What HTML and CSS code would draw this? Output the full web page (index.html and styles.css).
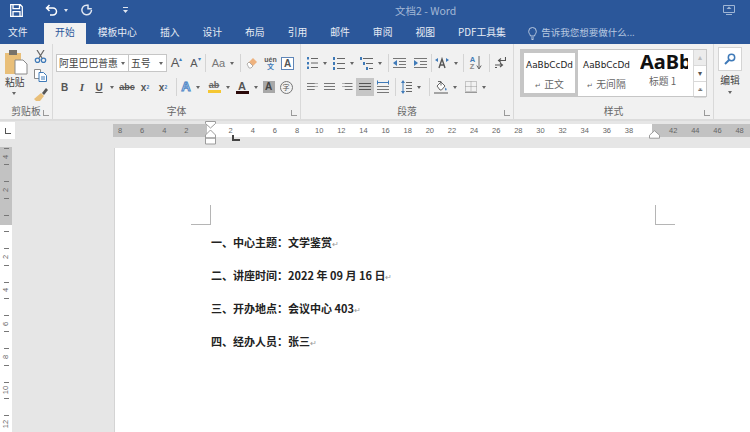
FILE: index.html
```html
<!DOCTYPE html>
<html lang="zh-CN">
<head>
  <meta charset="UTF-8" />
  <title>文档2 - Word</title>
  <link rel="stylesheet" href="styles.css">
</head>
<body>
  <!-- 标题栏 -->
  <div class="titlebar">
    <svg class="qa-save" width="13" height="13" viewBox="0 0 13 13"><path d="M.7.7h9.6l2 2v9.6H.7zM3 .7v4h6.5v-4M3 12.3V7.6h7v4.7" fill="none" stroke="#fff" stroke-width="1.3"/></svg>
    <svg class="qa-undo" width="13" height="12" viewBox="0 0 13 12"><path d="M4.500 1 1.500 4l3 3M1.500 4h6.500a3.500 3.500 0 0 1 0 7H5" fill="none" stroke="#fff" stroke-width="1.500"/></svg>
    <span class="arrow arrow-white qa-arrow"></span>
    <svg class="qa-redo" width="12" height="12" viewBox="0 0 12 12"><path d="M7.500 1.500A4.800 4.800 0 1 0 10.500 6M7 .5v4.200h3.800" fill="none" stroke="#dfe6f1" stroke-width="1.500"/></svg>
    <svg class="qa-more" width="5" height="6" viewBox="0 0 5 6"><path d="M0 0h5v1H0zM0 3h5L2.500 6z" fill="#dfe6f1"/></svg>
    <span class="doc-title">文档2 - Word</span>
    <svg class="restore" width="12" height="10" viewBox="0 0 12 10"><path d="M.5.500h11v7H.5zM3 9.500h6" fill="none" stroke="#9fb5d4"/><path d="m6 1.500 2.500 2.500h-5z" fill="#9fb5d4"/></svg>
  </div>

  <!-- 选项卡 -->
  <div class="tabs">
    <span class="tab tab-file">文件</span>
    <span class="tab tab-on">开始</span>
    <span class="tab">模板中心</span>
    <span class="tab">插入</span>
    <span class="tab">设计</span>
    <span class="tab">布局</span>
    <span class="tab">引用</span>
    <span class="tab">邮件</span>
    <span class="tab">审阅</span>
    <span class="tab">视图</span>
    <span class="tab">PDF工具集</span>
    <svg class="bulb" width="9" height="13" viewBox="0 0 9 13"><path d="M2.500 9C2 7 .7 6.500.7 4.300a3.800 3.800 0 0 1 7.600 0C8.300 6.500 7 7 6.500 9zM3 11h3M3.500 12.500h2" fill="none" stroke="#b9c9e0"/></svg>
    <span class="tell">告诉我您想要做什么...</span>
  </div>

  <!-- 功能区 -->
  <div class="ribbon">
    <div class="group g-clip">
      <div class="clip-body">
        <div class="paste">
          <svg width="23" height="25" viewBox="0 0 23 25"><rect x="0" y="3" width="16" height="21" fill="#e9bf79"/><rect x="4" y="0" width="8" height="5" fill="#77726a"/><path d="M10 10h8l4 4v10H10z" fill="#fff" stroke="#8a8a8a"/></svg>
          <span class="paste-text">粘贴</span>
          <span class="arrow"></span>
        </div>
        <div class="clip-tools">
          <svg width="13" height="13" viewBox="0 0 13 13"><path d="M3 0l5 8M10 0 5 8" fill="none" stroke="#666" stroke-width="1.200"/><circle cx="3.500" cy="10.300" r="2.200" fill="none" stroke="#3f7ab8" stroke-width="1.300"/><circle cx="9.500" cy="10.300" r="2.200" fill="none" stroke="#3f7ab8" stroke-width="1.300"/></svg>
          <svg width="13" height="13" viewBox="0 0 13 13"><path d="M.5.500h6v9h-6z" fill="#fff" stroke="#8a8a8a"/><path d="M5 3.500h4.500l3 3v6H5z" fill="#fff" stroke="#3f7ab8"/><path d="M7 8h4M7 10h4" stroke="#3f7ab8"/></svg>
          <svg width="14" height="13" viewBox="0 0 14 13"><path d="m7 5 3 3-4 5H2l-2-2z" fill="#e9bf79"/><path d="m8 5 4-5 2 2-4 5z" fill="#555"/></svg>
        </div>
      </div>
      <div class="group-label">剪贴板</div>
      <span class="launcher"></span>
    </div>

    <div class="group g-font">
      <div class="row font-row1">
        <div class="select"><span>阿里巴巴普惠</span><span class="arrow"></span></div>
        <div class="select select-size"><span>五号</span><span class="arrow"></span></div>
        <div class="cell"><span class="big-a">A<sup class="tri">▴</sup></span></div>
        <div class="cell"><span class="small-a">A<sup class="tri">▾</sup></span></div>
        <i class="sep"></i>
        <div class="cell"><span class="aa">Aa</span><span class="arrow"></span></div>
        <i class="sep"></i>
        <div class="cell">
          <svg width="12" height="13" viewBox="0 0 12 13"><path d="m1 7 6-6 4 4-6 6z" fill="#eeb27e"/><path d="m1 7 2-2 4 4-2 2H3z" fill="#fff" stroke="#888" stroke-width=".6"/></svg>
        </div>
        <div class="cell"><span class="ruby"><b>uén</b><b class="ruby-cn">文</b></span></div>
        <div class="cell"><span class="box-a">A</span></div>
      </div>
      <div class="row font-row2">
        <div class="cell fmt"><b>B</b></div>
        <div class="cell fmt"><i>I</i></div>
        <div class="cell fmt"><u>U</u><span class="arrow"></span></div>
        <div class="cell fmt"><s>abc</s></div>
        <div class="cell fmt">x<sub class="blue-idx">2</sub></div>
        <div class="cell fmt">x<sup class="blue-idx">2</sup></div>
        <i class="sep"></i>
        <div class="cell"><span class="fx-a">A</span><span class="arrow"></span></div>
        <div class="cell"><span class="hl-ab">ab</span><span class="arrow"></span></div>
        <div class="cell"><span class="color-a">A</span><span class="arrow"></span></div>
        <div class="cell"><span class="shade-a">A</span></div>
        <div class="cell"><span class="circle-zi">字</span></div>
      </div>
      <div class="group-label">字体</div>
      <span class="launcher"></span>
    </div>

    <div class="group g-para">
      <div class="row para-row1">
        <div class="cell"><svg width="11" height="12" viewBox="0 0 11 12"><path d="M4 1.500h7M4 6h7M4 10.500h7" stroke="#666"/><path d="M0 0h2v2.500H0zM0 5h2v2.500H0zM0 9.500h2V12H0z" fill="#3f7ab8"/></svg><span class="arrow"></span></div>
        <div class="cell"><svg width="12" height="13" viewBox="0 0 12 13"><path d="M4 1.500h8M4 6.500h8M4 11.500h8" stroke="#666"/><path d="M0 0h2v3H0zM0 5h2v3H0zM0 10h2v3H0z" fill="#3f7ab8"/></svg><span class="arrow"></span></div>
        <div class="cell"><svg width="13" height="13" viewBox="0 0 13 13"><path d="M3 1.500h10M6 6.500h7M9 11.500h4" stroke="#666"/><path d="M0 0h2v3H0zM3 5h2v3H3zM6 10h2v3H6z" fill="#3f7ab8"/></svg><span class="arrow"></span></div>
        <i class="sep"></i>
        <div class="cell"><svg width="13" height="11" viewBox="0 0 13 11"><path d="M0 .5h13M6 3.500h7M6 6.500h7M0 9.500h13" stroke="#777"/><path d="M0 5l4-3v6z" fill="#3f7ab8"/></svg></div>
        <div class="cell"><svg width="13" height="11" viewBox="0 0 13 11"><path d="M0 .5h13M6 3.500h7M6 6.500h7M0 9.500h13" stroke="#777"/><path d="M4 5 0 2v6z" fill="#3f7ab8"/></svg></div>
        <i class="sep"></i>
        <div class="cell"><svg width="14" height="12" viewBox="0 0 14 12"><path d="m4 11 3-9 3 9M5 8h4" fill="none" stroke="#555" stroke-width="1.400"/><path d="M0 3l3-2v4zM14 3l-3-2v4z" fill="#3f7ab8"/></svg><span class="arrow"></span></div>
        <i class="sep"></i>
        <div class="cell sort"><span class="sort-az"><b>A</b><b class="sort-z">Z</b></span><svg width="6" height="14" viewBox="0 0 6 14"><path d="M3 0v12.500M.8 9.500 3 13l2.200-3.500" fill="none" stroke="#666"/></svg></div>
        <i class="sep"></i>
        <div class="cell"><svg width="11" height="12" viewBox="0 0 11 12"><path d="M10.500 0v3.500H4M6 1.500 3.500 3.500 6 5.500" fill="none" stroke="#555" stroke-width="1.100"/><path d="M0 8h7M5 6l2.500 2L5 10M0 10.500h2" fill="none" stroke="#555" stroke-width="1.100"/></svg></div>
      </div>
      <div class="row para-row2">
        <div class="cell"><span class="al al-l"></span></div>
        <div class="cell"><span class="al al-c"></span></div>
        <div class="cell"><span class="al al-r"></span></div>
        <div class="cell cell-on"><span class="al al-j"></span></div>
        <div class="cell"><svg width="12" height="14" viewBox="0 0 12 14"><path d="M0 6.500h12M0 9.500h12M0 12.500h12" stroke="#777"/><path d="M.5.500v4M11.500.5v4M1 2.500h10" stroke="#3f7ab8"/></svg></div>
        <i class="sep"></i>
        <div class="cell"><svg width="11" height="14" viewBox="0 0 11 14"><path d="M5 2.500h6M5 5.500h6M5 8.500h6M5 11.500h6" stroke="#666"/><path d="M2 2v10" stroke="#3f7ab8"/><path d="M0 3l2-3 2 3zM0 11l2 3 2-3z" fill="#3f7ab8"/></svg><span class="arrow"></span></div>
        <i class="sep"></i>
        <div class="cell"><svg width="14" height="14" viewBox="0 0 14 14"><path d="M3 6 7 2l4 4-3.500 4H6z" fill="#fff" stroke="#666"/><path d="M4 1.500h3v4" fill="none" stroke="#666"/><path d="M11.500 7.500c1 1.200 1.500 2 .8 2.700s-1.800 0-.8-2.700z" fill="#3f7ab8"/><path d="M0 13h14" stroke="#8a8a8a" stroke-width="1.500"/></svg><span class="arrow"></span></div>
        <div class="cell"><svg width="12" height="12" viewBox="0 0 12 12"><path d="M.5.500h11v10H.5zM6 .5v10M.5 5.500h11" fill="none" stroke="#999" stroke-dasharray="1 1"/><path d="M0 11.500h12" stroke="#999"/></svg><span class="arrow"></span></div>
      </div>
      <div class="group-label">段落</div>
      <span class="launcher"></span>
    </div>

    <div class="group g-styles">
      <div class="gallery">
        <div class="style-item style-on"><span class="sample">AaBbCcDd</span><span class="style-name"><em>↵</em>正文</span></div>
        <div class="style-item"><span class="sample">AaBbCcDd</span><span class="style-name"><em>↵</em>无间隔</span></div>
        <div class="style-item style-h1"><span class="sample sample-h1">AaBb</span><span class="style-name">标题 1</span></div>
        <div class="gallery-scroll">
          <span class="scroll-btn scroll-off">▴</span>
          <span class="scroll-btn">▾</span>
          <span class="scroll-btn">⩡</span>
        </div>
      </div>
      <div class="group-label">样式</div>
      <span class="launcher"></span>
    </div>

    <div class="g-edit">
      <div class="edit-btn"><svg width="12" height="12" viewBox="0 0 12 12"><circle cx="7.500" cy="4.500" r="3.200" fill="none" stroke="#3f7ab8" stroke-width="1.500"/><path d="m5 7-4 4" stroke="#3f7ab8" stroke-width="2"/></svg></div>
      <span class="edit-text">编辑</span>
      <span class="arrow"></span>
    </div>
  </div>

  <!-- 文档区 -->
  <div class="workspace">
    <div class="ruler-row">
      <div class="tab-stop"><span class="tab-l"></span></div>
      <div class="h-ruler">
        <span class="mark">8</span><span class="mark">6</span><span class="mark">4</span><span class="mark">2</span><span class="mark"></span>
        <span class="mark">2</span><span class="mark">4</span><span class="mark">6</span><span class="mark">8</span><span class="mark">10</span><span class="mark">12</span><span class="mark">14</span><span class="mark">16</span><span class="mark">18</span><span class="mark">20</span><span class="mark">22</span><span class="mark">24</span><span class="mark">26</span><span class="mark">28</span><span class="mark">30</span><span class="mark">32</span><span class="mark">34</span><span class="mark">36</span><span class="mark">38</span><span class="mark"></span>
        <span class="mark">42</span><span class="mark">44</span><span class="mark">46</span><span class="mark">48</span>
        <svg class="indent-marker" width="11" height="24" viewBox="0 0 11 24"><path d="M.5.500h10v2L5.500 7 .5 2.500zM5.500 9l5 5v3H.5v-3zM.5 17h10v6H.5z" fill="#fff" stroke="#9b9b9b"/></svg>
        <span class="tab-mark"></span>
        <svg class="right-marker" width="11" height="9" viewBox="0 0 11 9"><path d="M5.500.7l5 4.500v3H.5v-3z" fill="#fff" stroke="#9b9b9b"/></svg>
      </div>
    </div>
    <div class="doc-row">
      <div class="v-ruler">
        <div class="v-cell"><span>4</span></div>
        <div class="v-cell"><span>2</span></div>
        <div class="v-cell"><span></span></div>
        <div class="v-cell"><span>2</span></div>
        <div class="v-cell"><span>4</span></div>
        <div class="v-cell"><span>6</span></div>
        <div class="v-cell"><span>8</span></div>
        <div class="v-cell"><span>10</span></div>
        <div class="v-cell"><span>12</span></div>
      </div>
      <div class="page">
        <span class="crop crop-l"></span>
        <span class="crop crop-r"></span>
        <p class="line">一、中心主题：文学鉴赏<em>↵</em></p>
        <p class="line">二、讲座时间：2022 年 09 月 16 日<em>↵</em></p>
        <p class="line">三、开办地点：会议中心 403<em>↵</em></p>
        <p class="line">四、经办人员：张三<em>↵</em></p>
      </div>
    </div>
  </div>
</body>
</html>
```

FILE: styles.css
```css
html, body {
  margin: 0;
  padding: 0;
  width: 750px;
  height: 432px;
  overflow: hidden;
  background: #e6e6e6;
  font-family: "Noto Sans CJK SC", "Liberation Sans", sans-serif;
  color: #444;
}

svg { display: block; flex: none; }

/* 小三角 */
.arrow {
  display: inline-block;
  flex: none;
  width: 0;
  height: 0;
  margin-left: 5px;
  border-left: 2.5px solid transparent;
  border-right: 2.5px solid transparent;
  border-top: 3px solid #666;
}
.arrow-white { border-top-color: #dfe6f1; }

/* 标题栏 */
.titlebar {
  display: flex;
  align-items: center;
  height: 22px;
  padding-bottom: 2px;
  box-sizing: border-box;
  background: #2b579a;
}
.qa-save { margin-left: 10px; }
.qa-undo { margin-left: 22px; }
.qa-arrow { margin-left: 6px; }
.qa-redo { margin-left: 13px; }
.qa-more { margin-left: 30px; }
.doc-title {
  margin-left: 267px;
  width: 62px;
  font-size: 10.5px;
  color: #a3b8d6;
  white-space: nowrap;
}
.restore { margin-left: 266px; }

/* 选项卡 */
.tabs {
  display: flex;
  align-items: stretch;
  height: 22px;
  background: #2b579a;
}
.tab {
  padding: 0 11.5px;
  font-size: 9.800px;
  line-height: 21px;
  color: #e8edf5;
  white-space: nowrap;
}
.tab-file { padding: 0 16px 0 8px; }
.tab-on {
  margin-top: 1px;
  line-height: 19px;
  background: #f1f1f1;
  color: #2b579a;
}
.bulb { margin: 5px 0 0 11px; }
.tell {
  margin-left: 4px;
  font-size: 9.500px;
  line-height: 21px;
  color: #b9c9e0;
  white-space: nowrap;
}

/* 功能区 */
.ribbon {
  display: flex;
  height: 75px;
  background: #f1f1f1;
  border-bottom: 2px solid #dcdcdc;
}
.group {
  position: relative;
  display: flex;
  flex-direction: column;
  flex: none;
  box-sizing: border-box;
  border-right: 1px solid #d9d9d9;
}
.g-clip { width: 53px; }
.g-font { width: 248px; padding: 10px 0 0 3px; }
.g-para { width: 213px; padding: 10px 0 0 3px; }
.g-styles { width: 200px; padding: 5px 0 0 6px; }

.group-label {
  position: absolute;
  left: 0;
  right: 0;
  bottom: 1px;
  font-size: 9.800px;
  line-height: 14px;
  text-align: center;
  color: #666;
}
.launcher {
  position: absolute;
  right: 3px;
  bottom: 3px;
  width: 5px;
  height: 5px;
  border-left: 1px solid #999;
  border-bottom: 1px solid #999;
}

.row {
  display: grid;
  align-items: center;
  height: 18px;
}
.font-row1 { grid-template-columns: 73px 38px 19px 19px 1px 34px 1px 21px 17px 17px; }
.font-row2 {
  grid-template-columns: 17px 18px 27px 18px 18px 18px 5px 27px 29px 27px 17px 18px;
  height: 18px;
  margin-top: 6px;
}
.para-row1 { grid-template-columns: 26px 27px 28px 4px 21px 20px 2px 28px 4px 24px 2px 20px; }
.para-row2 {
  grid-template-columns: 17px 17px 18px 18px 18px 4px 30px 4px 31px 29px;
  margin-top: 6px;
}
.cell {
  display: flex;
  align-items: center;
  justify-content: center;
  height: 18px;
}
.cell-on {
  background: #c6c6c6;
  height: 18px;
}
.sep {
  justify-self: end;
  display: block;
  width: 1px;
  height: 18px;
  background: #d4d4d4;
}

/* 剪贴板 */
.clip-body {
  display: flex;
  padding: 6px 0 0 5px;
}
.paste {
  display: flex;
  flex-direction: column;
  align-items: flex-start;
  width: 29px;
}
.paste-text {
  font-size: 9.800px;
  line-height: 14px;
  color: #444;
}
.paste .arrow { margin: 3px 0 0 7px; }
.clip-tools {
  display: flex;
  flex-direction: column;
  gap: 6px;
}

/* 字体 */
.select {
  display: flex;
  align-items: center;
  justify-content: space-between;
  box-sizing: border-box;
  height: 18px;
  padding: 0 3px 0 2px;
  background: #fff;
  border: 1px solid #c6c6c6;
  font-size: 9.800px;
  white-space: nowrap;
}
.select .arrow { margin-left: 0; }
.select-size { border-left: 0; }
.big-a, .small-a {
  font-family: "Liberation Sans", sans-serif;
  color: #555;
  line-height: 14px;
}
.big-a { font-size: 13px; }
.small-a { font-size: 11px; }
.tri {
  font-size: 6px;
  line-height: 0;
  vertical-align: 6px;
  color: #3f7ab8;
}
.aa {
  font-family: "Liberation Sans", sans-serif;
  font-size: 11px;
  color: #777;
}
.ruby {
  display: flex;
  flex-direction: column;
  align-items: center;
  font-family: "Liberation Sans", sans-serif;
  font-size: 7px;
  line-height: 7px;
  color: #555;
}
.ruby-cn {
  font-family: "Noto Sans CJK SC", sans-serif;
  color: #3f7ab8;
}
.box-a {
  display: block;
  box-sizing: border-box;
  width: 13px;
  height: 13px;
  border: 1px solid #5f86b8;
  background: #fff;
  font: bold 10px/11px "Liberation Sans", sans-serif;
  text-align: center;
  color: #555;
}
.fmt {
  font-family: "Liberation Sans", sans-serif;
  font-size: 10px;
  font-weight: bold;
  color: #555;
}
.fmt .arrow { margin-left: 7px; }
.fmt i { font-family: "Liberation Serif", serif; font-size: 11px; }
.fmt s { font-size: 9px; }
.blue-idx {
  font-size: 5px;
  line-height: 0;
  color: #3f7ab8;
}
.fx-a {
  font: bold 13px/14px "Liberation Sans", sans-serif;
  color: #e8f0fa;
  -webkit-text-stroke: 1px #4d86c6;
}
.hl-ab {
  display: block;
  width: 13px;
  font: bold 9px/9px "Liberation Sans", sans-serif;
  text-align: center;
  text-decoration: line-through;
  color: #666;
  border-bottom: 3px solid #f5c732;
}
.color-a {
  display: block;
  width: 13px;
  font: bold 11px/10px "Liberation Sans", sans-serif;
  text-align: center;
  color: #555;
  border-bottom: 3px solid #2b0a0a;
}
.shade-a {
  display: block;
  width: 12px;
  height: 12px;
  background: #a8a8a8;
  font: bold 10px/12px "Liberation Sans", sans-serif;
  text-align: center;
  color: #444;
}
.circle-zi {
  display: block;
  box-sizing: border-box;
  width: 13px;
  height: 13px;
  border: 1px solid #777;
  border-radius: 50%;
  font-size: 7px;
  line-height: 11px;
  text-align: center;
  color: #555;
}

/* 段落 */
.sort { gap: 1px; }
.sort-az {
  display: flex;
  flex-direction: column;
  font-family: "Liberation Sans", sans-serif;
  font-size: 7.500px;
  line-height: 7px;
  color: #3f7ab8;
}
.sort-z { color: #888; }
.al {
  display: block;
  width: 11px;
  height: 9px;
  background: repeating-linear-gradient(#777 0 1px, transparent 1px 3px);
}
.al-l { clip-path: polygon(0 0, 100% 0, 100% 1px, 70% 1px, 70% 3px, 100% 3px, 100% 4px, 70% 4px, 70% 100%, 0 100%); }
.al-c { clip-path: polygon(0 0, 100% 0, 100% 100%, 0 100%); }
.al-r { clip-path: polygon(0 0, 100% 0, 100% 100%, 30% 100%, 30% 4px, 0 4px, 0 3px, 30% 3px, 30% 1px, 0 1px); }
.al-j { width: 12px; background: repeating-linear-gradient(#555 0 1px, transparent 1px 3px); }

/* 样式 */
.gallery {
  display: flex;
  box-sizing: border-box;
  width: 187px;
  height: 48px;
  background: #fff;
  border: 1px solid #c6c6c6;
}
.style-item {
  display: flex;
  flex-direction: column;
  align-items: center;
  box-sizing: border-box;
  width: 57px;
  height: 46px;
  padding-top: 7px;
  overflow: hidden;
}
.style-on {
  width: 57px;
  padding-top: 4px;
  border: 3px solid #c6c6c6;
}
.style-h1 { width: 57px; padding-top: 0; align-items: flex-start; }
.sample {
  height: 16px;
  font-family: "DejaVu Sans", sans-serif;
  font-size: 8.900px;
  line-height: 16px;
  color: #222;
  white-space: nowrap;
}
.sample-h1 {
  width: 48px;
  height: 24px;
  margin-left: 5px;
  overflow: hidden;
  font-family: "Noto Sans", sans-serif;
  font-size: 20px;
  font-weight: bold;
  line-height: 24px;
  color: #111;
}
.style-name {
  margin-top: 4px;
  font-size: 9.800px;
  line-height: 14px;
  color: #666;
  white-space: nowrap;
}
.style-h1 .style-name { margin: 0 0 0 14px; }
.style-name em {
  margin-right: 3px;
  font-style: normal;
  font-size: 7px;
}
.gallery-scroll {
  display: flex;
  flex-direction: column;
  margin-left: auto;
  width: 12px;
  border-left: 1px solid #d9d9d9;
}
.scroll-btn {
  flex: 1;
  font: 8px/15px "DejaVu Sans", sans-serif;
  text-align: center;
  color: #555;
  border-bottom: 1px solid #d9d9d9;
}
.scroll-off { background: #ececec; color: #bbb; }

/* 编辑 */
.g-edit {
  display: flex;
  flex-direction: column;
  align-items: center;
  width: 24px;
  margin-left: 4px;
  padding-top: 3px;
}
.edit-btn {
  display: flex;
  align-items: center;
  justify-content: center;
  box-sizing: border-box;
  width: 24px;
  height: 24px;
  background: #fff;
  border: 1px solid #d4d4d4;
}
.edit-text {
  margin-top: 2px;
  font-size: 9.800px;
  line-height: 14px;
}
.g-edit .arrow { margin: 4px 0 0; }

/* 标尺 */
.workspace {
  height: 311px;
  background: #e6e6e6;
}
.ruler-row {
  display: flex;
  height: 26px;
}
.tab-stop {
  display: flex;
  align-items: center;
  justify-content: center;
  flex: none;
  width: 15px;
  height: 17px;
  margin-top: 1px;
  background: #fff;
}
.tab-l {
  display: block;
  width: 5px;
  height: 5px;
  border-left: 1px solid #555;
  border-bottom: 1px solid #555;
}
.h-ruler {
  position: relative;
  display: flex;
  flex: 1;
  height: 13px;
  margin: 3px 0 0 98px;
  background: linear-gradient(to right, #c2c2c2 0 94px, #fff 94px 539.500px, #c2c2c2 539.500px);
}
.mark {
  flex: none;
  width: 22.130px;
  font-family: "Liberation Sans", sans-serif;
  font-size: 7.500px;
  line-height: 13px;
  text-align: center;
  color: #666;
}
.mark:first-child { margin-left: -4px; }
.indent-marker {
  position: absolute;
  left: 92px;
  top: -3px;
}
.tab-mark {
  position: absolute;
  left: 119px;
  top: 11px;
  width: 6px;
  height: 4px;
  border-left: 2px solid #444;
  border-bottom: 2px solid #444;
}
.right-marker {
  position: absolute;
  left: 536px;
  top: 6px;
}

/* 页面 */
.doc-row {
  display: flex;
  height: 285px;
}
.v-ruler {
  flex: none;
  width: 12px;
  height: 285px;
  margin-right: 102px;
  overflow: hidden;
  background: linear-gradient(#c2c2c2 0 78px, #fff 78px);
}
.v-cell {
  display: flex;
  flex-direction: column;
  align-items: center;
  justify-content: space-between;
  box-sizing: border-box;
  height: 33.400px;
  padding: 0 0 8px;
  margin-top: 0;
  position: relative;
  top: -7px;
}
.v-cell::before, .v-cell::after {
  content: "";
  display: block;
  flex: none;
  width: 5px;
  height: 1px;
  margin-top: 8px;
  background: #777;
}
.v-cell::after { margin-top: 0; }
.v-cell span {
  height: 8px;
  font-family: "Liberation Sans", sans-serif;
  font-size: 7.500px;
  line-height: 8px;
  color: #666;
  transform: rotate(-90deg);
  white-space: nowrap;
}
.page {
  position: relative;
  flex: 1;
  height: 284px;
  margin-top: 1px;
  padding: 86px 0 0 96px;
  box-sizing: border-box;
  background: #fff;
  border-left: 1px solid #d4d4d4;
}
.crop {
  position: absolute;
  top: 57px;
  width: 19px;
  height: 19px;
  border-bottom: 1px solid #b5b5b5;
}
.crop-l { left: 76px; border-right: 1px solid #b5b5b5; }
.crop-r { left: 540px; border-left: 1px solid #b5b5b5; }
.line {
  height: 16px;
  margin: 0 0 17px;
  font-size: 11px;
  font-weight: bold;
  line-height: 16px;
  color: #222;
  white-space: nowrap;
}
.line em {
  font-style: normal;
  font-weight: normal;
  font-size: 8px;
  line-height: 1;
  color: #999;
}
```
